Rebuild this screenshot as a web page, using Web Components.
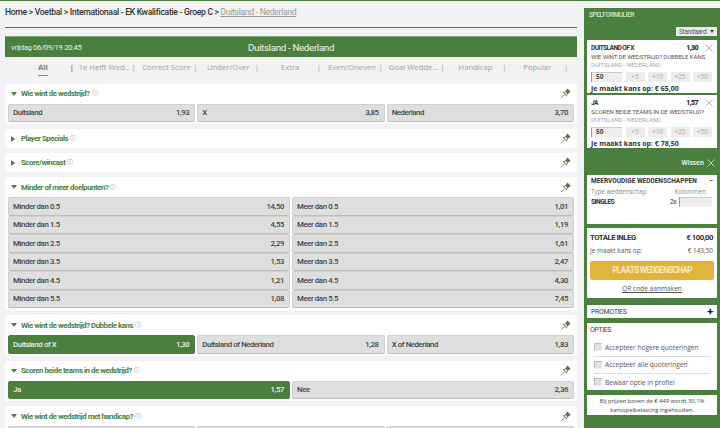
<!DOCTYPE html>
<html>
<head>
<meta charset="utf-8">
<style>
  html, body { margin: 0; height: 428px; overflow: hidden; background: #f2f2f2; }
  body { font-family: "Roboto", sans-serif; color: #333; }
  #page { display: flex; align-items: flex-start; border-top: 1px solid #4a7f3f; height: 427px; overflow: hidden; }
  #main { width: 572px; margin-left: 5px; flex: none; }
  bet-slip { margin-left: 7px; margin-top: 7px; }
</style>
</head>
<body>
<div id="page">
  <div id="main">
    <bread-crumb></bread-crumb>
    <match-header date="vrijdag 06/09/19 20:45" title="Duitsland - Nederland"></match-header>
    <tab-bar></tab-bar>

    <market-box title="Wie wint de wedstrijd?" open>
      <odds-grid cols="3" data-items="Duitsland|1,93;X|3,85;Nederland|3,70"></odds-grid>
    </market-box>
    <market-box title="Player Specials"></market-box>
    <market-box title="Score/wincast"></market-box>
    <market-box title="Minder of meer doelpunten?" open>
      <odds-grid cols="2" data-items="Minder dan 0.5|14,50;Meer dan 0.5|1,01;Minder dan 1.5|4,55;Meer dan 1.5|1,19;Minder dan 2.5|2,29;Meer dan 2.5|1,61;Minder dan 3.5|1,53;Meer dan 3.5|2,47;Minder dan 4.5|1,21;Meer dan 4.5|4,30;Minder dan 5.5|1,08;Meer dan 5.5|7,45"></odds-grid>
    </market-box>
    <market-box title="Wie wint de wedstrijd? Dubbele kans" open>
      <odds-grid cols="3" data-items="Duitsland of X|1,30|on;Duitsland of Nederland|1,28;X of Nederland|1,83"></odds-grid>
    </market-box>
    <market-box title="Scoren beide teams in de wedstrijd?" open>
      <odds-grid cols="2" data-items="Ja|1,57|on;Nee|2,36"></odds-grid>
    </market-box>
    <market-box title="Wie wint de wedstrijd met handicap?" open>
      <odds-grid cols="3" data-items="|;|;|"></odds-grid>
    </market-box>
  </div>
  <bet-slip></bet-slip>
</div>

<script>
const GREEN = '#4a7f3f';
const BASE = '"Roboto", sans-serif';
const WIDE = '"Open Sans", sans-serif';
const PIN = `<svg width="11" height="11" viewBox="0 0 11 11" fill="none"><path d="M1 10.2 4 7" stroke="#777" stroke-width=".8"/><path d="M3 4.4 6.8 8" stroke="#555" stroke-width="1"/><path d="M4.2 5 5.2 3.4 8 6l-1.6 1z" fill="#fff" stroke="#666" stroke-width=".7"/><path d="M5.4 3.6 7.4.6 10.6 3.8 7.8 6z" fill="#4a7f3f"/></svg>`;
const CROSS = (c, s) => `<svg width="${s}" height="${s}" viewBox="0 0 10 10" fill="none"><path d="M.5.5l9 9M9.5.5l-9 9" stroke="${c}" stroke-width=".8"/></svg>`;

class BreadCrumb extends HTMLElement {
  connectedCallback() {
    this.attachShadow({ mode: 'open' });
    this.shadowRoot.innerHTML = `
      <style>
        :host { display: block; height: 26px; margin-bottom: 8px; border-bottom: 1px solid ${GREEN}; font: 500 8.6px/23px ${BASE}; letter-spacing: -.3px; color: #333; white-space: nowrap; }
        u { color: #999; font-weight: 400; }
      </style>
      Home &gt; Voetbal &gt; Internationaal - EK Kwalificatie - Groep C &gt; <u>Duitsland - Nederland</u>`;
  }
}
customElements.define('bread-crumb', BreadCrumb);

class MatchHeader extends HTMLElement {
  connectedCallback() {
    this.attachShadow({ mode: 'open' });
    this.shadowRoot.innerHTML = `
      <style>
        :host { display: grid; grid-template-columns: 1fr auto 1fr; align-items: center; height: 20px; padding: 0 6px; background: ${GREEN}; color: #fff; border-top: 1px solid #7fa878; }
        .d { font-size: 7.6px; letter-spacing: -.3px; color: #e8f0e6; }
        .t { font-size: 9.8px; letter-spacing: -.35px; color: #eef4ec; }
      </style>
      <span class="d">${this.getAttribute('date')}</span>
      <span class="t">${this.getAttribute('title')}</span>`;
  }
}
customElements.define('match-header', MatchHeader);

class TabBar extends HTMLElement {
  connectedCallback() {
    this.attachShadow({ mode: 'open' });
    const names = ['All', '1e Helft Wed...', 'Correct Score', 'Under/Over', 'Extra', 'Even/Oneven', 'Goal Wedde...', 'Handicap', 'Popular'];
    this.shadowRoot.innerHTML = `
      <style>
        :host { display: flex; height: 26.5px; padding-left: 7px; font: 7.7px ${WIDE}; color: #a0a0a0; white-space: nowrap; overflow: hidden; }
        div { flex: none; width: 61.8px; text-align: center; position: relative; line-height: 20px; height: 20px; }
        div::after { content: "|"; position: absolute; right: 0; top: 0; font-size: 7.5px; }
        div.a { color: #7c7c7c; font-weight: 700; }
        div.a span { display: inline-block; line-height: 12px; padding-bottom: 2px; border-bottom: 1px solid #888; margin-top: 4px; vertical-align: top; }
      </style>
      ${names.map((n, i) => `<div class="${i ? '' : 'a'}"><span>${n}</span></div>`).join('')}`;
  }
}
customElements.define('tab-bar', TabBar);

class MarketBox extends HTMLElement {
  connectedCallback() {
    const open = this.hasAttribute('open');
    this.attachShadow({ mode: 'open' });
    this.shadowRoot.innerHTML = `
      <style>
        :host { display: block; background: #fff; margin-bottom: 5px; padding: 0 3px; border-radius: 2px; }
        header { display: flex; align-items: center; height: ${open ? 20 : 19}px; color: ${GREEN}; font: 700 7.8px ${BASE}; letter-spacing: -.45px; }
        .arr { width: 0; height: 0; flex: none; }
        .open { border: 3px solid transparent; border-top: 4px solid ${GREEN}; border-bottom: 0; margin: 0 4px 0 3px; }
        .closed { border: 3px solid transparent; border-left: 4px solid ${GREEN}; border-right: 0; margin: 0 6px 0 3px; }
        i { font: 400 6px "DejaVu Sans", sans-serif; letter-spacing: 0; color: #888; margin-left: 2px; font-style: normal; }
        svg { margin-left: auto; margin-right: 3px; }
        .body { padding-bottom: 2px; }
      </style>
      <header><span class="arr ${open ? 'open' : 'closed'}"></span>${this.getAttribute('title')}<i>ⓘ</i>${PIN}</header>
      ${open ? '<div class="body"><slot></slot></div>' : ''}`;
  }
}
customElements.define('market-box', MarketBox);

class OddsGrid extends HTMLElement {
  connectedCallback() {
    const items = this.dataset.items.split(';').map(s => s.split('|'));
    this.attachShadow({ mode: 'open' });
    this.shadowRoot.innerHTML = `
      <style>
        :host { display: grid; grid-template-columns: repeat(${this.getAttribute('cols')}, 1fr); column-gap: 2px; }
        div { display: flex; justify-content: space-between; align-items: center; height: 18.5px; box-sizing: border-box; padding: 0 5px 0 4px; background: #dedede; border: 1px solid #cfcfcf; border-bottom: 1px solid #bdbdbd; border-radius: 2px; font: 500 7.8px ${BASE}; letter-spacing: -.4px; color: #444; }
        div.on { background: ${GREEN}; border-color: ${GREEN}; color: #e8f0e6; }
      </style>
      ${items.map(([n, v, s]) => `<div class="${s || ''}"><span>${n}</span><span>${v}</span></div>`).join('')}`;
  }
}
customElements.define('odds-grid', OddsGrid);

class SlipCard extends HTMLElement {
  connectedCallback() {
    const a = this.dataset;
    this.attachShadow({ mode: 'open' });
    this.shadowRoot.innerHTML = `
      <style>
        :host { display: block; background: #fff; padding: 3px 4px 2px 4px; margin-bottom: 2px; height: 53px; box-sizing: border-box; color: #333; }
        .top { display: flex; align-items: center; font: 700 6.6px ${BASE}; letter-spacing: -.6px; height: 9px; }
        .top b { margin-left: auto; margin-right: 7px; font-size: 7px; }
        .q { font: 400 6.1px/8px ${BASE}; letter-spacing: -.1px; color: #555; margin-top: 1px; white-space: nowrap; }
        .m { font: 400 6.1px/8px ${BASE}; letter-spacing: -.1px; color: #aaa; white-space: nowrap; }
        .row { display: flex; gap: 3.5px; margin-top: 3px; }
        .inp { width: 31px; height: 10px; box-sizing: border-box; background: #eee; border-left: 1px solid #999; border-top: 1px solid #ccc; font: 700 6.5px/8px ${WIDE}; padding-left: 4px; color: #444; }
        .inc { width: 19px; height: 10px; background: #ececec; color: #aaa; font: 6.5px/10px ${WIDE}; text-align: center; }
        .win { font: 700 7px/9px ${WIDE}; margin-top: 2px; }
      </style>
      <div class="top"><span>${a.sel}</span><b>${a.odd}</b>${CROSS('#888', 8)}</div>
      <div class="q">${a.q}</div>
      <div class="m">DUITSLAND - NEDERLAND</div>
      <div class="row"><span class="inp">50</span><span class="inc">+5</span><span class="inc">+10</span><span class="inc">+25</span><span class="inc">+50</span></div>
      <div class="win">Je maakt kans op: € ${a.win}</div>`;
  }
}
customElements.define('slip-card', SlipCard);

class OptionRow extends HTMLElement {
  connectedCallback() {
    this.attachShadow({ mode: 'open' });
    this.shadowRoot.innerHTML = `
      <style>
        :host { display: flex; align-items: center; height: 16.5px; gap: 3px; margin: 0 4px 0 3px; padding-left: 1px; font: 6.6px ${WIDE}; color: #555; }
        span { width: 6px; height: 6px; background: #e0e0e0; border: 1px solid #bbb; border-right-color: #eee; border-bottom-color: #eee; flex: none; }
      </style>
      <span></span><slot></slot>`;
  }
}
customElements.define('option-row', OptionRow);

class BetSlip extends HTMLElement {
  connectedCallback() {
    this.attachShadow({ mode: 'open' });
    this.shadowRoot.innerHTML = `
      <style>
        :host { display: block; width: 136px; height: 420px; background: ${GREEN}; flex: none; color: #333; }
        .head { height: 19px; padding-left: 5px; font: 500 6.4px/15px ${BASE}; letter-spacing: -.35px; color: #d8e6d4; }
        .inner { padding: 0 3px; }
        .sel { display: flex; justify-content: flex-end; margin-bottom: 4px; }
        .sel span { display: flex; align-items: center; width: 41px; height: 9px; box-sizing: border-box; background: #e9e9e9; font: 6.4px ${BASE}; letter-spacing: -.2px; padding-left: 3px; color: #555; }
        .sel i { border: 2.5px solid transparent; border-top: 3px solid #444; border-bottom: 0; margin-left: auto; margin-right: 3px; }
        .wis { display: flex; justify-content: flex-end; align-items: center; gap: 3px; height: 25px; padding-right: 2px; font: 700 6.4px ${WIDE}; color: #e6f0e3; }
        .multi { background: #fff; height: 49px; padding: 2px 4px; box-sizing: border-box; margin-bottom: 4px; }
        .mt { display: flex; justify-content: space-between; font: 700 6.5px/9px ${BASE}; white-space: nowrap; }
        .mh { display: flex; justify-content: space-between; font: 6.2px/8px ${WIDE}; color: #888; margin-top: 2px; padding-right: 7px; }
        .ms { display: flex; align-items: center; font: 700 6.6px ${BASE}; letter-spacing: -.5px; margin-top: 1px; }
        .ms em { margin-left: auto; font-style: normal; font-weight: 400; margin-right: 3px; }
        .ms span { width: 33px; height: 10px; box-sizing: border-box; margin-right: 1px; background: #eee; border-left: 1px solid #999; border-top: 1px solid #ccc; }
        .tot { background: #fff; height: 70px; padding: 3px 3px; box-sizing: border-box; margin-bottom: 7px; }
        .tl { display: flex; justify-content: space-between; font: 700 7.8px/13px ${BASE}; letter-spacing: -.5px; padding-right: 1px; }
        .tk { display: flex; justify-content: space-between; font: 6.4px/11px ${WIDE}; color: #555; padding-right: 1px; margin-top: 1px; }
        .btn { height: 19px; margin-top: 5px; background: #e2b33c; border-radius: 2px; color: #f6e9c4; font: 700 8.2px/19px ${BASE}; letter-spacing: -.7px; text-align: center; }
        .qr { text-align: center; font: 6.6px ${WIDE}; color: #555; text-decoration: underline; margin-top: 4px; }
        .promo { display: flex; justify-content: space-between; align-items: center; background: #fff; height: 13px; padding: 0 4px; font: 7px ${BASE}; letter-spacing: -.35px; color: #444; margin-bottom: 5px; }
        .promo b { font-size: 11px; color: #111; }
        .opt { background: #fff; height: 67px; margin-bottom: 5px; box-sizing: border-box; padding: 3px; }
        .opt h4 { margin: 0 0 4px; font: 400 7px/9px ${BASE}; letter-spacing: -.4px; color: #444; }
        option-row + option-row { border-top: 1px solid #ddd; }
        .note { background: #fff; height: 20px; font: 5.8px/9px ${WIDE}; color: #444; text-align: center; padding-top: 2px; box-sizing: border-box; }
      </style>
      <div class="head">SPELFORMULIER</div>
      <div class="inner">
        <div class="sel"><span>Standaard<i></i></span></div>
        <slip-card data-sel="DUITSLAND OF X" data-odd="1,30" data-q="WIE WINT DE WEDSTRIJD? DUBBELE KANS" data-win="65,00"></slip-card>
        <slip-card data-sel="JA" data-odd="1,57" data-q="SCOREN BEIDE TEAMS IN DE WEDSTRIJD?" data-win="78,50"></slip-card>
        <div class="wis">Wissen ${CROSS('#fff', 8)}</div>
        <div class="multi">
          <div class="mt"><span>MEERVOUDIGE WEDDENSCHAPPEN</span><span>−</span></div>
          <div class="mh"><span>Type weddenschap</span><span>Kolommen</span></div>
          <div class="ms">SINGLES<em>2x</em><span></span></div>
        </div>
        <div class="tot">
          <div class="tl"><span>TOTALE INLEG</span><span>€ 100,00</span></div>
          <div class="tk"><span>Je maakt kans op:</span><span>€ 143,50</span></div>
          <div class="btn">PLAATS WEDDENSCHAP</div>
          <div class="qr">QR code aanmaken</div>
        </div>
        <div class="promo"><span>PROMOTIES</span><b>+</b></div>
        <div class="opt">
          <h4>OPTIES</h4>
          <option-row>Accepteer hogere quoteringen</option-row>
          <option-row>Accepteer alle quoteringen</option-row>
          <option-row>Bewaar optie in profiel</option-row>
        </div>
        <div class="note">Bij prijzen boven de € 449 wordt 30,1%<br>kansspelbelasting ingehouden.</div>
      </div>`;
  }
}
customElements.define('bet-slip', BetSlip);
</script>
</body>
</html>
